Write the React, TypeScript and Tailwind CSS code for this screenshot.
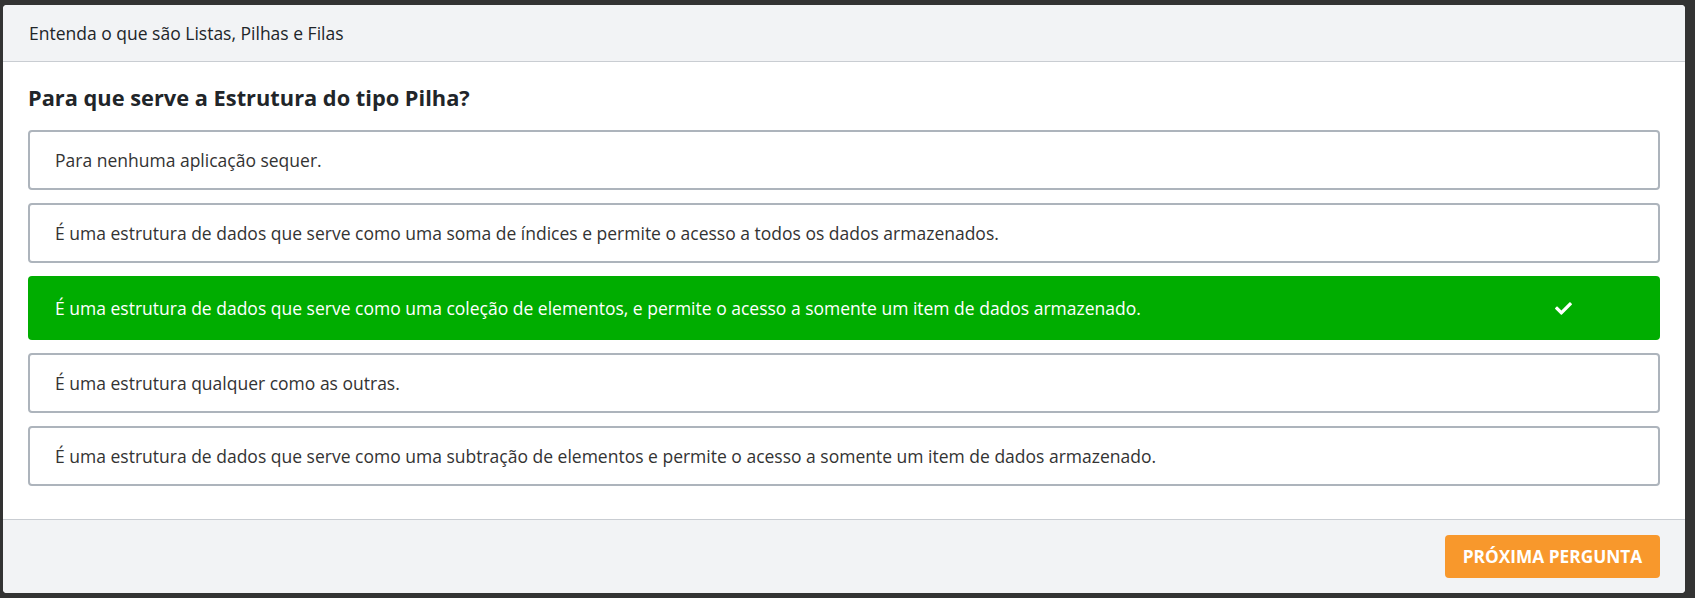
import React from "react";

const options = [
  { text: "Para nenhuma aplicação sequer.", correct: false },
  { text: "É uma estrutura de dados que serve como uma soma de índices e permite o acesso a todos os dados armazenados.", correct: false },
  { text: "É uma estrutura de dados que serve como uma coleção de elementos, e permite o acesso a somente um item de dados armazenado.", correct: true },
  { text: "É uma estrutura qualquer como as outras.", correct: false },
  { text: "É uma estrutura de dados que serve como uma subtração de elementos e permite o acesso a somente um item de dados armazenado.", correct: false },
];

function Check() {
  return (
    <svg width="17" height="14" viewBox="0 0 512 420" fill="white" aria-hidden="true">
      <path d="M173.9 409.4L7.5 243c-10-10-10-26.2 0-36.2l36.2-36.2c10-10 26.2-10 36.2 0L192 282.7 432.1 42.6c10-10 26.2-10 36.2 0l36.2 36.2c10 10 10 26.2 0 36.2L210.1 409.4c-10 10-26.2 10-36.2 0z" />
    </svg>
  );
}

export default function App() {
  return (
    <div
      className="w-[1695px] h-[598px] bg-[#333333] pl-[3px] pt-[5px]"
      style={{ fontFamily: '"Open Sans", "Noto Sans", sans-serif' }}
    >
      <div className="w-[1682px] h-[588px] bg-white rounded-[4px] overflow-hidden flex flex-col">
        <div className="h-[57px] bg-[#f2f3f5] border-b border-[#c9cdd2] flex items-center px-[26px] text-[17.5px] text-[#212529] shrink-0">
          Entenda o que são Listas, Pilhas e Filas
        </div>
        <div className="flex-1 px-[25px] pt-[21px]">
          <h2 className="text-[21.8px] font-bold text-[#212529] leading-[30px] mb-[17px]">
            Para que serve a Estrutura do tipo Pilha?
          </h2>
          <div className="flex flex-col gap-[13px]">
            {options.map((o, i) =>
              o.correct ? (
                <div
                  key={i}
                  className="h-[64px] rounded-[4px] bg-[#00ad00] flex items-center pl-[27px] text-white text-[17.5px] font-medium"
                >
                  <span className="flex-1">{o.text}</span>
                  <span className="w-[17px] mr-[88px] flex items-center"><Check /></span>
                </div>
              ) : (
                <div
                  key={i}
                  className="h-[60px] rounded-[4px] border-2 border-[#adb4bc] flex items-center pl-[25px] text-[17.5px] text-[#333333]"
                >
                  {o.text}
                </div>
              )
            )}
          </div>
        </div>
        <div className="h-[74px] bg-[#f2f3f5] border-t border-[#c9cdd2] flex items-center justify-end pr-[25px] shrink-0">
          <button className="h-[43px] w-[215px] rounded-[4px] bg-[#f8982c] text-white font-bold text-[17.3px]">
            PRÓXIMA PERGUNTA
          </button>
        </div>
      </div>
    </div>
  );
}
